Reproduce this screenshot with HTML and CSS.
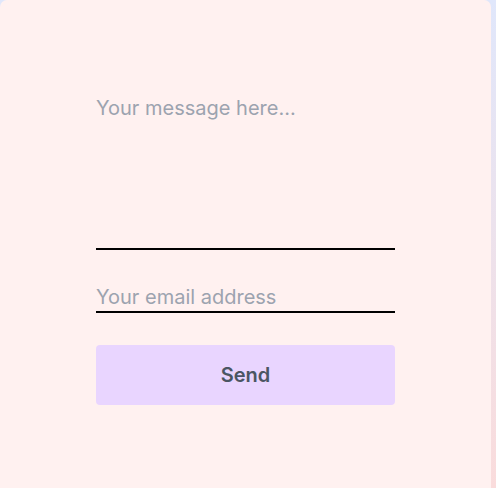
FILE: index.html
```html
<!DOCTYPE html>
<html>
<head>
<meta charset="utf-8">
<link rel="stylesheet" href="styles.css">
</head>
<body>
<div class="card">
  <form class="form">
    <textarea class="message" placeholder="Your message here..."></textarea>
    <input class="email" type="email" placeholder="Your email address">
    <button class="send" type="button">Send</button>
  </form>
</div>
</body>
</html>
```

FILE: styles.css
```css
html, body {
  margin: 0;
  padding: 0;
}
body {
  min-height: 488px;
  background: linear-gradient(to bottom, #e0e7fb, #fadcdc);
  font-family: Inter, "Noto Sans", sans-serif;
}
.card {
  width: 491px;
  box-sizing: border-box;
  padding: 96px 96px 40px;
  background: #fff1f0;
  border-radius: 7px 7px 0 0;
  min-height: 488px;
}
.form {
  display: flex;
  flex-direction: column;
}
.message, .email {
  font-family: Inter, "Noto Sans", sans-serif;
  font-size: 20px;
  color: #374151;
  background: transparent;
  border: none;
  border-bottom: 2px solid #000;
  border-radius: 0;
  outline: none;
  resize: none;
  width: 100%;
  box-sizing: border-box;
  margin: 0;
}
.message {
  height: 154px;
  padding: 0;
  line-height: normal;
}
.email {
  margin-top: 35px;
  height: 28px;
  padding: 0 0 2px;
  line-height: 24px;
}
.message::placeholder, .email::placeholder {
  color: #9ca3af;
  opacity: 1;
}
.send {
  margin-top: 32px;
  height: 60px;
  border: none;
  border-radius: 4px;
  background: #e9d5ff;
  color: #4b5563;
  font-family: Inter, "Noto Sans", sans-serif;
  font-size: 20px;
  font-weight: 600;
}
```
